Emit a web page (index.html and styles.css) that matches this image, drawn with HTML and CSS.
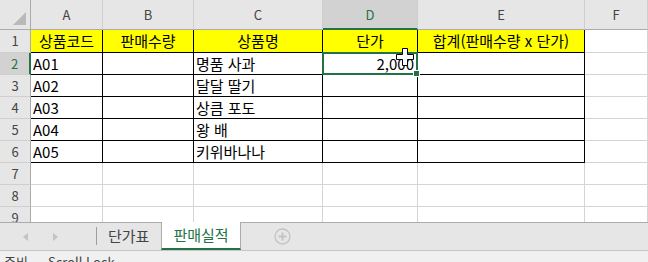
FILE: index.html
```html
<!DOCTYPE html>
<html lang="ko">
<head>
<meta charset="utf-8">
<link rel="stylesheet" href="styles.css">
</head>
<body>
<div class="app">
  <div class="sheet">
    <div class="ch corner"><span class="tri"></span></div>
    <div class="ch">A</div>
    <div class="ch">B</div>
    <div class="ch">C</div>
    <div class="ch ch-sel">D</div>
    <div class="ch">E</div>
    <div class="ch">F</div>

    <div class="rh">1</div>
    <div class="c b y ctr">상품코드</div>
    <div class="c b y ctr">판매수량</div>
    <div class="c b y ctr">상품명</div>
    <div class="c b y ctr">단가</div>
    <div class="c b y ctr">합계(판매수량 x 단가)</div>
    <div class="c"></div>

    <div class="rh rh-sel">2</div>
    <div class="c b">A01</div>
    <div class="c b"></div>
    <div class="c b">명품 사과</div>
    <div class="c b num active">2,000
      <span class="sel"><span class="handle"></span></span>
      <svg class="cursor" width="18" height="18" viewBox="0 0 18 18"><path d="M6.5 0.5h5v6h6v5h-6v6h-5v-6h-6v-5h6z" fill="#fff" stroke="#000" stroke-width="1"/></svg>
    </div>
    <div class="c b"></div>
    <div class="c"></div>

    <div class="rh">3</div>
    <div class="c b">A02</div>
    <div class="c b"></div>
    <div class="c b">달달 딸기</div>
    <div class="c b"></div>
    <div class="c b"></div>
    <div class="c"></div>

    <div class="rh">4</div>
    <div class="c b">A03</div>
    <div class="c b"></div>
    <div class="c b">상큼 포도</div>
    <div class="c b"></div>
    <div class="c b"></div>
    <div class="c"></div>

    <div class="rh">5</div>
    <div class="c b">A04</div>
    <div class="c b"></div>
    <div class="c b">왕 배</div>
    <div class="c b"></div>
    <div class="c b"></div>
    <div class="c"></div>

    <div class="rh">6</div>
    <div class="c b">A05</div>
    <div class="c b"></div>
    <div class="c b">키위바나나</div>
    <div class="c b"></div>
    <div class="c b"></div>
    <div class="c"></div>

    <div class="rh">7</div>
    <div class="c"></div><div class="c"></div><div class="c"></div><div class="c"></div><div class="c"></div><div class="c"></div>
    <div class="rh">8</div>
    <div class="c"></div><div class="c"></div><div class="c"></div><div class="c"></div><div class="c"></div><div class="c"></div>
    <div class="rh">9</div>
    <div class="c"></div><div class="c"></div><div class="c"></div><div class="c"></div><div class="c"></div><div class="c"></div>
  </div>

  <div class="tabs">
    <div class="nav">
      <svg width="8" height="10" viewBox="0 0 8 10"><path d="M6 1v8L1 5z" fill="#c3c3c3"/></svg>
      <svg width="8" height="10" viewBox="0 0 8 10"><path d="M2 1v8l5-4z" fill="#c3c3c3"/></svg>
    </div>
    <div class="sep"></div>
    <div class="tab">단가표</div>
    <div class="tab tab-on">판매실적</div>
    <div class="add">
      <svg width="17" height="17" viewBox="0 0 17 17"><circle cx="8.5" cy="8.5" r="7.5" fill="none" stroke="#c3c3c3" stroke-width="1.3"/><path d="M8.5 4.5v8M4.5 8.5h8" stroke="#c3c3c3" stroke-width="2"/></svg>
    </div>
  </div>

  <div class="status">
    <span>준비</span>
    <span>Scroll Lock</span>
  </div>
</div>
</body>
</html>
```

FILE: styles.css
```css
* { box-sizing: border-box; }
html, body { margin: 0; padding: 0; background: #fff; }
body {
  width: 648px;
  height: 262px;
  overflow: hidden;
  font-family: "Noto Sans CJK KR", "Noto Sans", sans-serif;
}
.app { display: flex; flex-direction: column; height: 262px; }

.sheet {
  display: grid;
  grid-template-columns: 31px 72px 91px 129px 95px 167px 1fr;
  grid-template-rows: 30px 23px repeat(7, 22px) 22px;
  height: 222px;
  overflow: hidden;
}

.ch {
  background: #e6e6e6;
  border-right: 1px solid #cfcfcf;
  border-bottom: 1px solid #ababab;
  color: #444;
  font-size: 13px;
  line-height: 30px;
  text-align: center;
}
.corner { position: relative; border-right: 1px solid #ababab; }
.tri {
  position: absolute;
  right: 4px;
  bottom: 4px;
  width: 0;
  height: 0;
  border-left: 13px solid transparent;
  border-bottom: 13px solid #b9b9b9;
}
.ch-sel {
  background: #d2d2d2;
  color: #217346;
  border-bottom: 2px solid #217346;
}

.rh {
  background: #e6e6e6;
  border-right: 1px solid #ababab;
  border-bottom: 1px solid #cfcfcf;
  color: #444;
  font-size: 13px;
  line-height: 22px;
  text-align: center;
}
.rh-sel {
  background: #d2d2d2;
  color: #217346;
  border-right: 2px solid #217346;
}

.c {
  border-right: 1px solid #d4d4d4;
  border-bottom: 1px solid #d4d4d4;
  font-size: 15px;
  line-height: 22px;
  color: #000;
  padding: 0 2px;
  white-space: nowrap;
}
.b { border-right-color: #000; border-bottom-color: #000; }
.y { background: #ffff00; }
.ctr { text-align: center; }
.num { text-align: right; padding-right: 3px; }
.active { position: relative; }
.sel {
  position: absolute;
  left: -1px;
  top: -1px;
  right: -1px;
  bottom: -1px;
  border: 2px solid #217346;
  z-index: 2;
}
.handle {
  position: absolute;
  right: -4px;
  bottom: -4px;
  width: 7px;
  height: 7px;
  background: #217346;
  border: 1px solid #fff;
}
.cursor {
  position: absolute;
  left: 73px;
  top: -5px;
  z-index: 3;
}

.tabs {
  display: flex;
  align-items: stretch;
  height: 29px;
  background: #e6e6e6;
  border-top: 1px solid #ababab;
  border-bottom: 1px solid #c6c6c6;
}
.nav {
  width: 96px;
  display: flex;
  align-items: center;
  gap: 21px;
  padding-left: 22px;
}
.sep {
  width: 1px;
  margin: 4px 0 5px;
  background: #9e9e9e;
}
.tab {
  padding: 0 11px;
  font-size: 15px;
  line-height: 26px;
  color: #444;
}
.tab-on {
  margin-left: 1px;
  background: #fff;
  color: #217346;
  border-left: 1px solid #ababab;
  border-right: 1px solid #ababab;
  border-bottom: 2px solid #217346;
  margin-top: -1px;
}
.add {
  display: flex;
  align-items: center;
  padding-left: 33px;
}

.status {
  flex: 1;
  background: #f0f0f0;
  display: flex;
  gap: 20px;
  padding-left: 4px;
  font-size: 13px;
  line-height: 13px;
  color: #444;
  overflow: hidden;
  padding-top: 4px;
}
```
